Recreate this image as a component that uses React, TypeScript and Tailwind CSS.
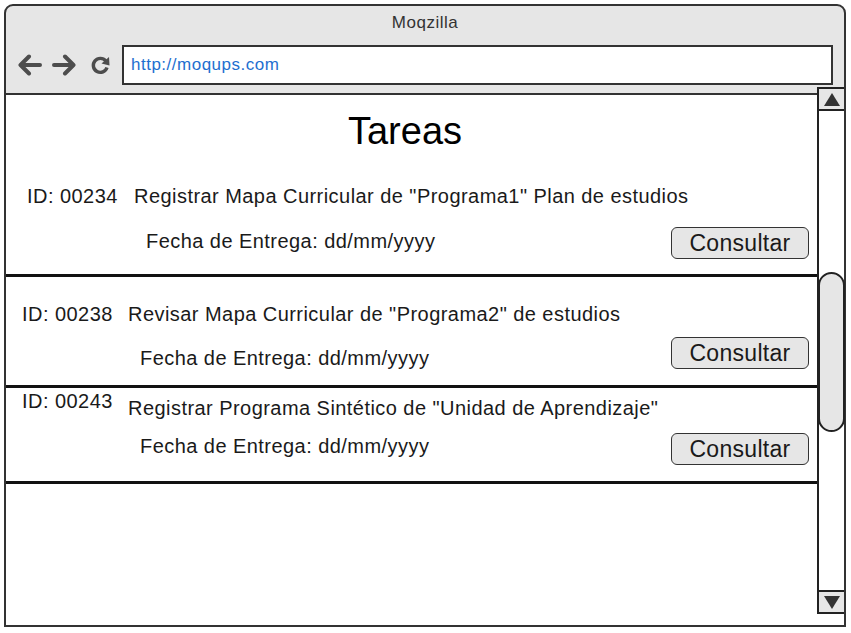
import React from 'react';

const tasks = [
  {
    id: '00234',
    title: 'Registrar Mapa Curricular de "Programa1" Plan de estudios',
    row: 'pt-[35px] pb-[15px]',
    idBox: 'pl-[21px]',
    idW: 'w-[107px]',
    titleTop: 'mt-0',
    lineTop: 'mt-[20px]',
    fechaPad: 'pl-[140px]',
    fechaTop: 'mt-[3px]',
  },
  {
    id: '00238',
    title: 'Revisar Mapa Curricular de "Programa2" de estudios',
    row: 'pt-[26px] pb-[16px]',
    idBox: 'pl-[16px]',
    idW: 'w-[106px]',
    titleTop: 'mt-0',
    lineTop: 'mt-[12px]',
    fechaPad: 'pl-[134px]',
    fechaTop: 'mt-[10px]',
  },
  {
    id: '00243',
    title: 'Registrar Programa Sintético de "Unidad de Aprendizaje"',
    row: 'pt-[2px] pb-[16px]',
    idBox: 'pl-[16px]',
    idW: 'w-[106px]',
    titleTop: 'mt-[7px]',
    lineTop: 'mt-[14px]',
    fechaPad: 'pl-[134px]',
    fechaTop: 'mt-[2px]',
  },
];

const Arrow = ({ flip }: { flip?: boolean }) => (
  <svg width="25" height="22" viewBox="0 0 25 22" className={flip ? 'scale-x-[-1]' : ''}>
    <path d="M23 11H4 M12 2.5L3.5 11l8.5 8.5" fill="none" stroke="#4d4d4d" strokeWidth="4" strokeLinecap="round" strokeLinejoin="round" />
  </svg>
);

const Reload = () => (
  <svg width="22" height="22" viewBox="0 0 22 22">
    <path d="M16.8 7A7 7 0 1 0 18 13.5" fill="none" stroke="#4d4d4d" strokeWidth="3.4" />
    <path d="M20 3L20.5 11.5 12.5 9.5Z" fill="#4d4d4d" />
  </svg>
);

export default function App() {
  return (
    <div className="w-[851px] h-[633px] bg-white font-['Liberation_Sans',Arial,sans-serif] text-[#1a1a1a]">
      <div className="ml-[4px] pt-[4px]">
        <div className="w-[842px] h-[623px] border-2 border-[#333] rounded-t-[9px] bg-[#e6e6e6] flex flex-col">
          {/* browser chrome */}
          <div className="h-[87px] flex flex-col">
            <div className="mt-[7px] text-center text-[17px] leading-[20px] tracking-[0.5px] text-[#333]">Moqzilla</div>
            <div className="mt-[12px] h-[40px] flex items-center pl-[11px] pr-[11px]">
              <Arrow />
              <div className="ml-[10px]">
                <Arrow flip />
              </div>
              <div className="ml-[12px]">
                <Reload />
              </div>
              <div className="ml-[11px] flex-1 h-[40px] border-2 border-[#333] bg-white flex items-center pl-[7px] text-[17px] tracking-[0.5px] text-[#1e6fd0]">
                http://moqups.com
              </div>
            </div>
          </div>

          {/* page */}
          <div className="flex-1 bg-white border-t-2 border-[#333] flex items-start">
            <div className="flex-1">
              <div className="pt-[17px] pr-[13px] text-center text-[38px] leading-[38px] text-black">Tareas</div>
              {tasks.map((t) => (
                <div key={t.id} className={`${t.row} border-b-[3px] border-[#111] text-[20px] leading-[22px] tracking-[0.45px]`}>
                  <div className={`flex items-start ${t.idBox}`}>
                    <span className={`${t.idW} shrink-0`}>ID: {t.id}</span>
                    <span className={t.titleTop}>{t.title}</span>
                  </div>
                  <div className={`${t.lineTop} flex items-start justify-between ${t.fechaPad} pr-[8px]`}>
                    <span className={t.fechaTop}>Fecha de Entrega: dd/mm/yyyy</span>
                    <button className="w-[138px] h-[32px] border-[1.5px] border-[#333] rounded-[6px] bg-[#e6e6e6] text-[23px] leading-[28px] tracking-[0.3px] text-[#1a1a1a]">
                      Consultar
                    </button>
                  </div>
                </div>
              ))}
            </div>

            {/* scrollbar */}
            <div className="w-[27px] h-[527px] -mt-[8px] border-l-2 border-t-2 border-b-2 border-[#222] bg-white flex flex-col">
              <div className="h-[22px] border-b-2 border-[#222] bg-[#e6e6e6] flex items-center justify-center">
                <svg width="16" height="13" viewBox="0 0 16 13">
                  <path d="M8 0L16 13H0Z" fill="#333" />
                </svg>
              </div>
              <div className="mt-[161px] -ml-[1px] w-[27px] h-[160px] border-2 border-[#222] rounded-full bg-[#e6e6e6]" />
              <div className="flex-1" />
              <div className="h-[22px] border-t-2 border-[#222] bg-[#e6e6e6] flex items-center justify-center">
                <svg width="16" height="13" viewBox="0 0 16 13">
                  <path d="M0 0H16L8 13Z" fill="#333" />
                </svg>
              </div>
            </div>
          </div>
        </div>
      </div>
    </div>
  );
}
